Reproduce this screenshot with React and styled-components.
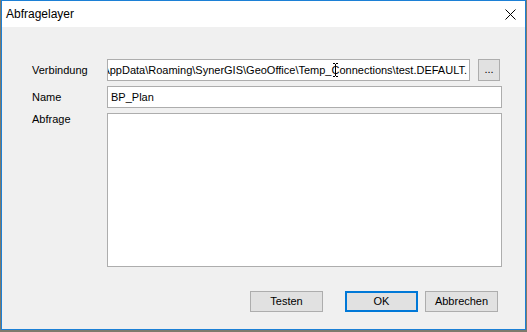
import React from "react";
import styled, { createGlobalStyle } from "styled-components";

const GlobalStyle = createGlobalStyle`
  html, body {
    margin: 0;
    padding: 0;
    background: #7d7a6c;
  }
  body {
    font-family: "Microsoft Sans Serif", "Liberation Sans", Arial, sans-serif;
    font-size: 11px;
    color: #000;
  }
`;

const Desktop = styled.div`
  width: 527px;
  height: 332px;
  padding-left: 1px;
  box-sizing: border-box;
`;

const Window = styled.div`
  width: 525px;
  height: 330px;
  box-sizing: border-box;
  border: 1px solid #1c80d6;
  display: flex;
  flex-direction: column;
  background: #f0f0f0;
`;

const TitleBar = styled.div`
  height: 26px;
  flex: none;
  background: #ffffff;
  display: flex;
  align-items: center;
  justify-content: space-between;
  padding: 0 9px 0 4px;
`;

const Title = styled.span`
  font-family: "Segoe UI", "Liberation Sans", sans-serif;
  font-size: 12px;
  line-height: 16px;
`;

const CloseIcon = styled.svg`
  width: 11px;
  height: 11px;
  display: block;
`;

const Content = styled.div`
  flex: 1;
  display: flex;
  flex-direction: column;
  padding: 32px 23px 17px 28px;
`;

const Form = styled.div`
  display: grid;
  grid-template-columns: 77px minmax(0, 1fr);
  grid-template-rows: 22px 22px 154px;
  row-gap: 5px;
`;

const Label = styled.label`
  display: flex;
  align-items: ${({ $top }) => ($top ? "flex-start" : "center")};
  padding-left: 2px;
  line-height: 14px;
  margin-top: ${({ $top }) => ($top ? "-1px" : "0")};
`;

const FieldRow = styled.div`
  display: flex;
  gap: 8px;
  min-width: 0;
  margin-right: 2px;
`;

const TextBox = styled.div`
  flex: 1;
  min-width: 0;
  position: relative;
  box-sizing: border-box;
  height: ${({ $tall }) => ($tall ? "154px" : "22px")};
  border: 1px solid #adadad;
  background: #ffffff;
  display: flex;
  align-items: center;
  justify-content: ${({ $end }) => ($end ? "flex-end" : "flex-start")};
  padding: 0 2px 0 3px;
  overflow: hidden;
  white-space: nowrap;
  line-height: 14px;
`;

const Cursor = styled.svg`
  position: absolute;
  right: 131px;
  top: 3px;
  width: 5px;
  height: 14px;
`;

const SmallButton = styled.button`
  width: 22px;
  height: 22px;
  flex: none;
  box-sizing: border-box;
  border: 1px solid #adadad;
  background: #e1e1e1;
  font-family: inherit;
  font-size: 11px;
  padding: 0 0 3px;
  line-height: 12px;
  color: #000;
`;

const ButtonRow = styled.div`
  display: flex;
  justify-content: flex-end;
  margin-top: auto;
  margin-right: 4px;
`;

const Button = styled.button`
  width: 73px;
  height: 21px;
  box-sizing: border-box;
  border: ${({ $primary }) => ($primary ? "2px solid #0078d7" : "1px solid #adadad")};
  background: #e1e1e1;
  font-family: inherit;
  font-size: 11px;
  line-height: 13px;
  color: #000;
  padding: 0;
  margin-left: ${({ $gap }) => $gap}px;
`;

export default function App() {
  return (
    <Desktop>
      <GlobalStyle />
      <Window>
        <TitleBar>
          <Title>Abfragelayer</Title>
          <CloseIcon viewBox="0 0 11 11">
            <path d="M0.5 0.5 L10.5 10.5 M10.5 0.5 L0.5 10.5" stroke="#000" strokeWidth="1" fill="none" />
          </CloseIcon>
        </TitleBar>
        <Content>
          <Form>
            <Label>Verbindung</Label>
            <FieldRow>
              <TextBox $end>
                AppData\Roaming\SynerGIS\GeoOffice\Temp_Connections\test.DEFAULT.
                <Cursor viewBox="0 0 5 14">
                  <path d="M0 0.5 H2 M3 0.5 H5 M2.5 1 V13 M0 13.5 H2 M3 13.5 H5" stroke="#000" strokeWidth="1" fill="none" />
                </Cursor>
              </TextBox>
              <SmallButton>...</SmallButton>
            </FieldRow>
            <Label>Name</Label>
            <TextBox>BP_Plan</TextBox>
            <Label $top>Abfrage</Label>
            <TextBox $tall />
          </Form>
          <ButtonRow>
            <Button $gap={0}>Testen</Button>
            <Button $primary $gap={22}>OK</Button>
            <Button $gap={7}>Abbrechen</Button>
          </ButtonRow>
        </Content>
      </Window>
    </Desktop>
  );
}
